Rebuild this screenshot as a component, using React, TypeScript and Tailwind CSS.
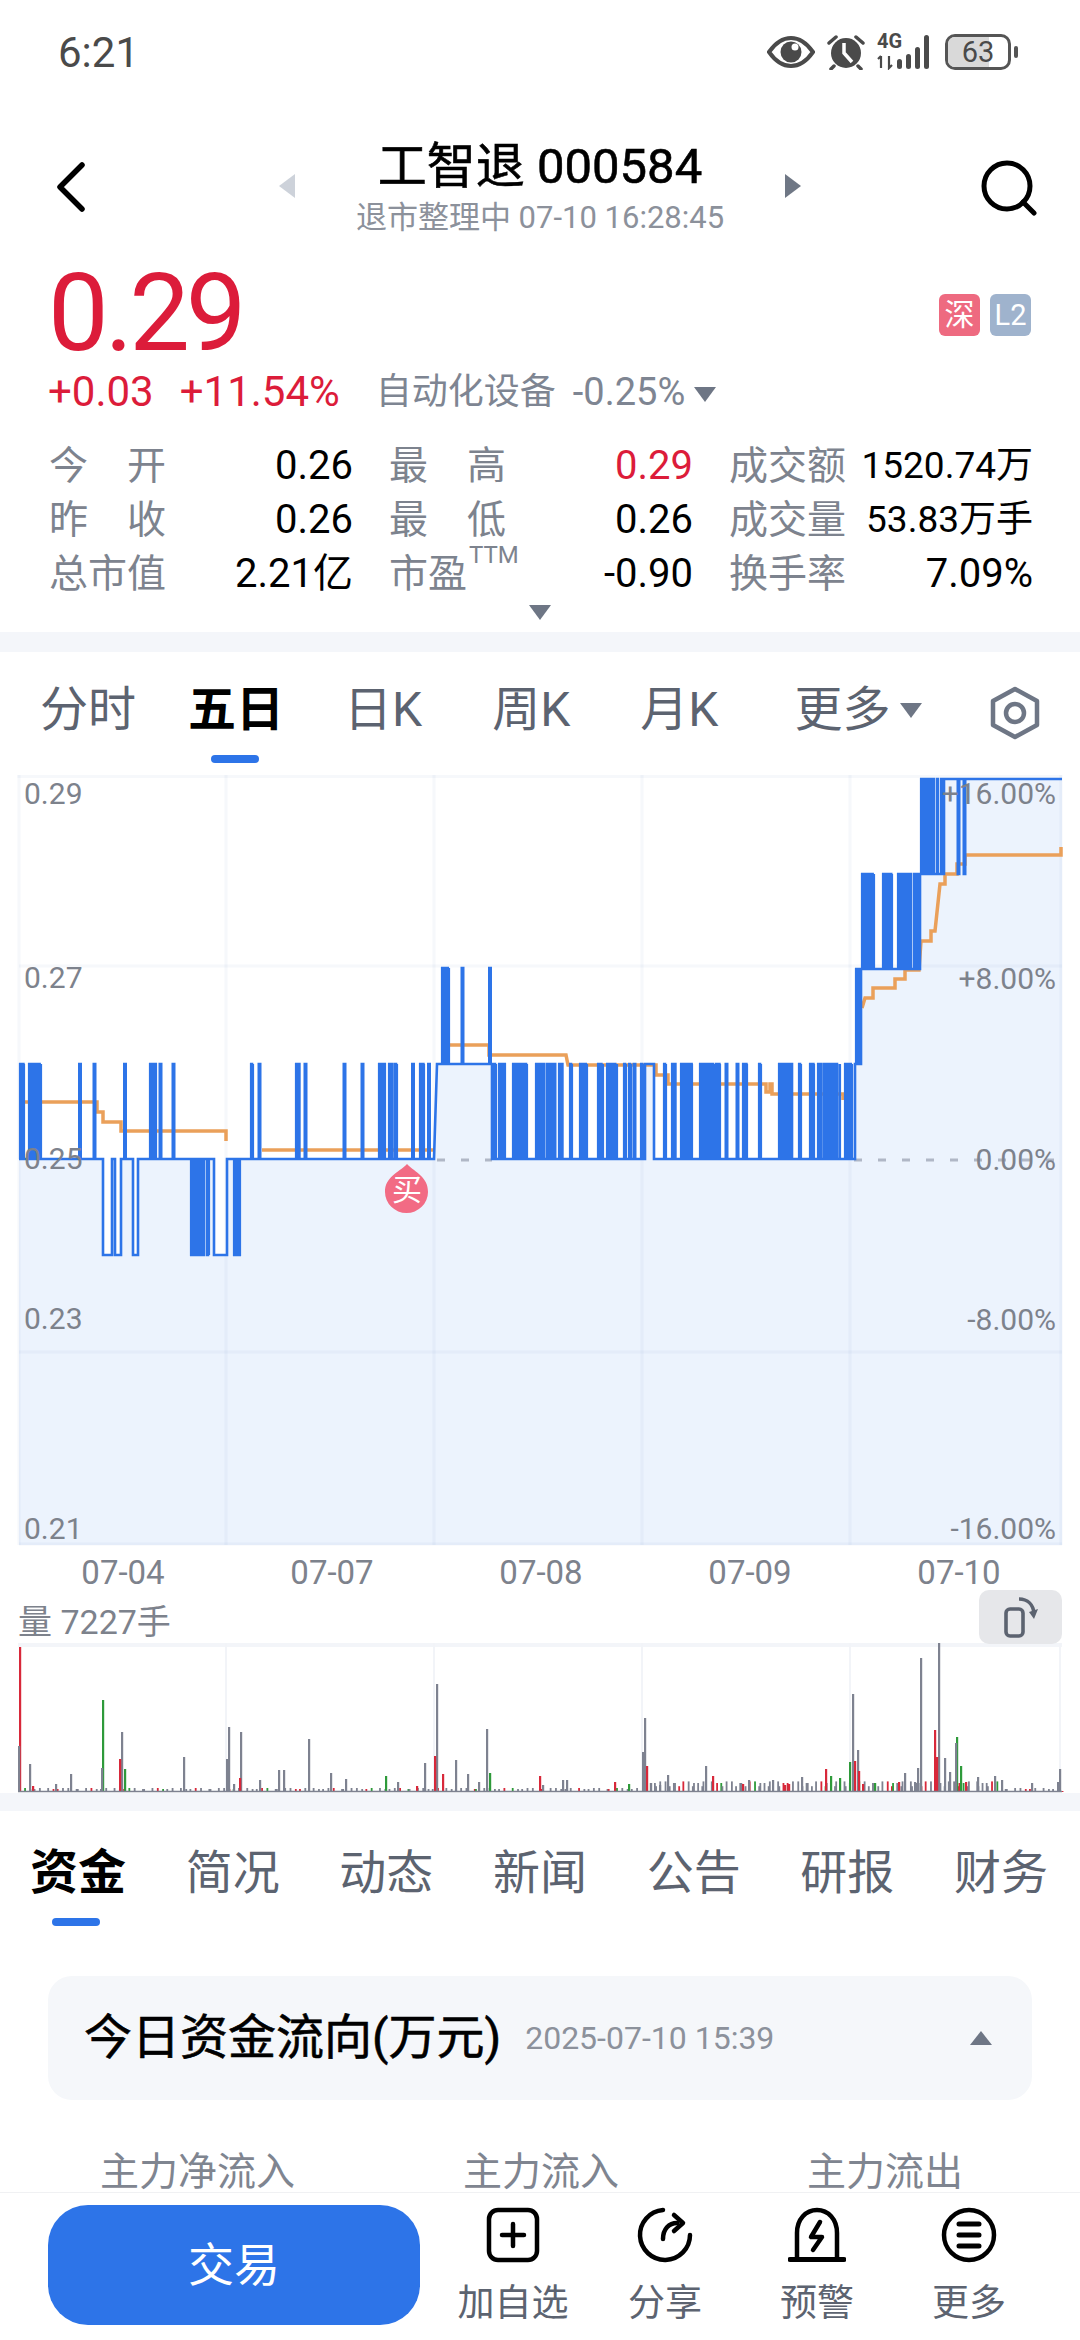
const BLUE = "#2d74e8";

type Ev = [number, number, number, boolean?];

// builds the step line in page coordinates
function piece(base: number, evs: Ev[], end: number) {
  let d = "";
  for (const [a, b, lvl, dense] of evs) {
    if (b - a <= 3) {
      const m = (a + b) / 2;
      d += `L${m - 0.7} ${base}L${m - 0.7} ${lvl}L${m + 0.7} ${lvl}L${m + 0.7} ${base}`;
    } else if (dense) {
      let k = 0;
      for (let x = a + 1.2; x < b - 1.2; k++) {
        d += `L${x} ${base}L${x} ${lvl}L${x + 0.8} ${lvl}L${x + 0.8} ${base}`;
        x += k % 6 === 5 ? 4 : 2.4;
      }
      d += `L${b - 1.2} ${base}L${b - 1.2} ${lvl}L${b - 1.2} ${base}`;
    } else {
      d += `L${a} ${base}L${a} ${lvl}L${b} ${lvl}L${b} ${base}`;
    }
  }
  return d + `L${end} ${base}`;
}

const U = 1064;
const L = 1255;
const firstDays: Ev[] = [
  [19, 25, U, true], [28, 42, U, true], [79, 81, U], [93, 96, U],
  [103, 112, L], [115, 121, L], [124, 126, U], [133, 138, L],
  [149, 157, U, true], [159, 162, U, true], [172, 175, U],
  [190, 210, L, true], [214, 227, L], [233, 241, L, true],
  [250, 254, U, true], [258, 261, U], [295, 300, U, true], [304, 307, U],
  [343, 346, U], [361, 364, U], [378, 386, U, true], [388, 393, U, true],
  [394, 398, U, true], [412, 414, U], [419, 425, U, true], [428, 430, U],
];
const midDays: Ev[] = [
  [493, 497, U, true], [498, 506, U, true], [512, 528, U, true], [535, 545, U, true],
  [546, 556, U, true], [558, 563, U, true], [569, 573, U, true], [579, 588, U, true],
  [597, 604, U, true], [606, 618, U, true], [623, 627, U, true], [628, 632, U, true],
  [633, 636, U], [640, 644, U, true], [645, 654, U],
  [663, 667, U, true], [671, 676, U, true], [680, 693, U, true], [699, 715, U, true],
  [715, 721, U, true], [725, 728, U], [736, 739, U], [742, 748, U, true],
  [758, 762, U, true], [778, 793, U, true], [798, 802, U, true], [809, 815, U, true],
  [817, 822, U, true], [823, 841, U, true], [844, 853, U, true],
];

const line =
  "M19 1159" +
  piece(1159, firstDays, 434) +
  "L437 1064" +
  piece(1064, [[441, 450, 968, true], [461, 464, 968], [489, 491, 968]], 492) +
  "L492 1159" +
  piece(1159, midDays, 855) +
  "L855 1064" +
  piece(1064, [[855, 861, 969, true]], 861) +
  "L861 969" +
  piece(969, [[861, 875, 874, true], [882, 893, 874, true], [897, 919, 874, true]], 920) +
  "L920 874" +
  piece(874, [[920, 939, 779, true], [941, 943, 779]], 944) +
  "L944 779" +
  piece(779, [[957, 960, 874], [963, 966, 874]], 1062);

const avg1 = "M25 1102H97V1112H103V1122H121V1131H226V1141";
const avg2 = "M262 1150H434";
const avg3 =
  "M445 1045H489V1055H566L568 1065H656V1075H668V1084H766V1092H770V1084H772V1094H843V1100";
const avg4 =
  "M862 1008L865 998H873V988H895V979H905V970H919L921 941H931V931H935L940 884H945V874H957V864H965V855H1061V847";

const vols: [number, number, string][] = [
  [20, 145, "r"], [19, 46, "g"], [30, 28, "g"], [33, 6, "r"], [56, 8, "g"], [71, 18, "g"],
  [103, 92, "n"], [102, 24, "g"], [122, 60, "g"], [120, 33, "r"], [125, 23, "n"],
  [184, 35, "g"], [229, 65, "g"], [227, 33, "g"], [241, 60, "g"], [240, 14, "r"],
  [234, 8, "g"], [260, 12, "g"], [279, 22, "g"], [284, 22, "g"], [309, 53, "g"],
  [331, 19, "g"], [346, 13, "g"], [386, 16, "n"], [398, 10, "g"], [417, 6, "r"],
  [425, 29, "g"], [437, 108, "g"], [435, 36, "r"], [443, 18, "r"], [456, 32, "g"],
  [468, 18, "g"], [479, 10, "g"], [487, 63, "g"], [490, 19, "n"], [540, 16, "r"],
  [543, 7, "g"], [563, 12, "g"], [567, 12, "g"], [615, 10, "r"], [629, 8, "n"],
  [645, 74, "g"], [643, 40, "g"], [647, 26, "r"], [651, 9, "g"], [668, 17, "g"],
  [660, 7, "g"], [706, 26, "g"], [713, 16, "r"], [749, 12, "g"], [743, 8, "r"],
  [773, 12, "g"], [785, 7, "r"], [802, 15, "g"], [789, 8, "r"], [826, 23, "r"],
  [831, 16, "n"], [840, 14, "n"], [853, 98, "g"], [850, 30, "n"], [855, 31, "r"],
  [858, 42, "g"], [859, 21, "r"], [863, 8, "r"], [875, 9, "n"], [899, 10, "r"],
  [905, 19, "g"], [915, 10, "g"], [921, 134, "g"], [918, 24, "g"], [935, 62, "r"],
  [939, 149, "g"], [937, 35, "r"], [945, 34, "g"], [957, 55, "n"], [956, 49, "g"],
  [961, 26, "n"], [950, 20, "g"], [966, 10, "r"], [978, 15, "g"], [995, 16, "g"],
  [1002, 12, "g"], [1032, 9, "g"], [1058, 10, "g"], [1060, 23, "g"],
];
// low noise along the volume base, busier on the last days
const noise: [number, number, string][] = Array.from({ length: 330 }, (_, i) => {
  const x = 20 + i * 3.16 + (i * 7) % 3;
  const s = (i * 37) % 11;
  const v = (i * i * 13) % 7;
  const h = x > 640 && x < 1000 ? 1 + v * 1.6 : v > 4 ? v - 2 : 1;
  return [x, h, s === 0 || s === 7 ? "r" : s === 4 ? "n" : "g"];
});
const volColor: Record<string, string> = { g: "#7e8290", r: "#d8283a", n: "#2e9a3a" };

const priceLabels = [
  ["0.29", "top-[1px]"],
  ["0.27", "top-[185px]"],
  ["0.25", "top-[366px]"],
  ["0.23", "top-[526px]"],
  ["0.21", "top-[736px]"],
];
const pctLabels = [
  ["+16.00%", "top-[1px]"],
  ["+8.00%", "top-[186px]"],
  ["0.00%", "top-[367px]"],
  ["-8.00%", "top-[527px]"],
  ["-16.00%", "top-[736px]"],
];

function Tri({ className }: { className: string }) {
  return (
    <svg viewBox="0 0 22 15" className={className}>
      <path d="M0 0H22L11 15Z" fill="currentColor" />
    </svg>
  );
}

function StatusIcons() {
  return (
    <div className="flex items-center">
      <svg width="48" height="34" viewBox="0 0 48 34" fill="none">
        <path d="M2 17C9 7 16 3 24 3s15 4 22 14c-7 10-14 14-22 14S9 27 2 17Z" stroke="#4a4a4a" strokeWidth="4" />
        <circle cx="24" cy="17" r="10.5" fill="#4a4a4a" />
        <circle cx="28" cy="12" r="3.5" fill="#fff" />
      </svg>
      <svg width="40" height="36" viewBox="0 0 40 36" className="ml-[11px]" fill="none">
        <circle cx="20" cy="19" r="15" fill="#4a4a4a" />
        <path d="M18 9V19L26 28" stroke="#fff" strokeWidth="3.5" />
        <path d="M3 9L10 3M37 9L30 3M8 32L5 35M32 32L35 35" stroke="#4a4a4a" strokeWidth="3.5" strokeLinecap="round" />
      </svg>
      <div className="relative ml-[11px] h-[36px] w-[62px]">
        <span className="absolute left-0 top-[-4px] text-[20px] font-bold leading-[22px] text-[#4a4a4a]">4G</span>
        <svg width="62" height="36" viewBox="0 0 62 36" className="absolute inset-0">
          <path d="M4 22V34M1 25L4 22M12 22V34L15 31" stroke="#4a4a4a" strokeWidth="2.2" fill="none" />
          <rect x="20" y="25" width="5" height="10" rx="2.5" fill="#4a4a4a" />
          <rect x="29" y="20" width="5" height="15" rx="2.5" fill="#4a4a4a" />
          <rect x="38" y="13" width="5" height="22" rx="2.5" fill="#4a4a4a" />
          <rect x="47" y="1" width="5" height="34" rx="2.5" fill="#4a4a4a" />
        </svg>
      </div>
      <div className="relative ml-[6px] flex h-[36px] w-[66px] items-center justify-center overflow-hidden rounded-[10px] border-[3px] border-[#555]">
        <div className="absolute inset-y-0 left-0 w-[41px] bg-[#d9d9d9]" />
        <span className="relative text-[29px] leading-none text-[#4a4a4a]">63</span>
      </div>
      <div className="ml-[3px] h-[12px] w-[4px] rounded-full bg-[#555]" />
    </div>
  );
}

function Stat({ label, value, color = "text-black text-[40px]", sup }: { label: string[]; value: string; color?: string; sup?: boolean }) {
  return (
    <div className="flex h-[54px] items-center justify-between">
      <div className="relative flex w-[117px] justify-between text-[#7d838e]">
        {label.map((t) => (
          <span key={t}>{t}</span>
        ))}
        {sup && <span className="absolute left-[80px] top-[-4px] text-[24px] leading-none">TTM</span>}
      </div>
      <span className={color}>{value}</span>
    </div>
  );
}

function Tab({ children, active }: { children: string; active?: boolean }) {
  return <span className={active ? "font-bold text-black" : "text-[#5c6370]"}>{children}</span>;
}

function Action({ label, children }: { label: string; children: React.ReactNode }) {
  return (
    <div className="flex w-[152px] flex-col items-center">
      <div className="flex h-[56px] items-center justify-center">{children}</div>
      <span className="mt-[19px] text-[37px] leading-[44px] text-[#5c6370]">{label}</span>
    </div>
  );
}

export default function App() {
  return (
    <div className="flex h-[2340px] w-[1080px] flex-col overflow-hidden bg-white font-['Roboto','Noto_Sans_CJK_SC',sans-serif]">
      <div className="flex h-[104px] shrink-0 items-center justify-between pl-[58px] pr-[62px]">
        <span className="text-[42px] text-[#4a4a4a]">6:21</span>
        <StatusIcons />
      </div>

      <div className="relative flex h-[144px] shrink-0 flex-col items-center">
        <div className="mt-[33px] text-[49px] leading-[60px] text-black [-webkit-text-stroke:0.6px_#000]">工智退 000584</div>
        <div className="mt-[2px] text-[31px] leading-[38px] text-[#8c919b]">退市整理中 07-10 16:28:45</div>
        <svg width="30" height="50" viewBox="0 0 30 50" className="absolute left-[56px] top-[58px]" fill="none">
          <path d="M26 3L4 25L26 47" stroke="#000" strokeWidth="5.5" strokeLinecap="round" strokeLinejoin="round" />
        </svg>
        <svg width="16" height="24" viewBox="0 0 16 24" className="absolute left-[279px] top-[70px]">
          <path d="M16 0V24L0 12Z" fill="#cdd2da" />
        </svg>
        <svg width="16" height="24" viewBox="0 0 16 24" className="absolute left-[785px] top-[70px]">
          <path d="M0 0V24L16 12Z" fill="#6f7785" />
        </svg>
        <svg width="56" height="56" viewBox="0 0 56 56" className="absolute left-[981px] top-[56px]" fill="none">
          <circle cx="26" cy="26" r="23" stroke="#000" strokeWidth="5" />
          <path d="M42 42L53 53" stroke="#000" strokeWidth="5" strokeLinecap="round" />
        </svg>
      </div>

      <div className="relative h-[120px] shrink-0 pl-[48px] pt-[13px]">
        <div className="text-[108px] leading-[105px] tracking-[-4px] text-[#dc1c3a]">0.29</div>
        <div className="absolute left-[939px] top-[46px] flex h-[42px] w-[41px] items-center justify-center rounded-[6px] bg-[#ee6a80] text-[30px] leading-none text-white">深</div>
        <div className="absolute left-[990px] top-[46px] flex h-[42px] w-[41px] items-center justify-center rounded-[6px] bg-[#9fb3cd] text-[29px] leading-none text-white">L2</div>
      </div>

      <div className="flex h-[48px] shrink-0 items-center pl-[48px] text-[42px] leading-none">
        <span className="text-[#dc1c3a]">+0.03</span>
        <span className="ml-[26px] text-[#dc1c3a]">+11.54%</span>
        <span className="ml-[36px] text-[36px] text-[#7e8592]">自动化设备</span>
        <span className="ml-[17px] text-[38px] text-[#7e8592]">-0.25%</span>
        <Tri className="ml-[9px] mt-[4px] w-[22px] text-[#6e7685]" />
      </div>

      <div className="mt-[23px] grid shrink-0 grid-cols-[304px_304px_304px] gap-x-[36px] pl-[49px] text-[39px] leading-[54px]">
        <div>
          <Stat label={["今", "开"]} value="0.26" />
          <Stat label={["昨", "收"]} value="0.26" />
          <Stat label={["总市值"]} value="2.21亿" />
        </div>
        <div>
          <Stat label={["最", "高"]} value="0.29" color="text-[40px] text-[#dc1c3a]" />
          <Stat label={["最", "低"]} value="0.26" />
          <Stat label={["市盈"]} value="-0.90" sup />
        </div>
        <div>
          <Stat label={["成交额"]} value="1520.74万" color="text-[37px] text-black" />
          <Stat label={["成交量"]} value="53.83万手" color="text-[37px] text-black" />
          <Stat label={["换手率"]} value="7.09%" />
        </div>
      </div>

      <div className="flex h-[19px] shrink-0 items-end justify-center">
        <Tri className="w-[22px] text-[#6e7685]" />
      </div>

      <div className="mt-[12px] h-[20px] shrink-0 bg-[#f4f6fa]" />

      <div className="relative flex h-[123px] shrink-0 items-start pl-[40px] pt-[30px] text-[48px] leading-[56px]">
        <div className="flex gap-[52px]">
          <Tab>分时</Tab>
          <Tab active>五日</Tab>
          <span className="ml-[8px] flex gap-[70px]">
            <Tab>日K</Tab>
            <Tab>周K</Tab>
            <Tab>月K</Tab>
          </span>
        </div>
        <div className="ml-[76px] flex items-center">
          <Tab>更多</Tab>
          <Tri className="ml-[10px] w-[22px] text-[#6e7685]" />
        </div>
        <svg width="52" height="54" viewBox="0 0 52 54" className="absolute left-[989px] top-[34px]" fill="none">
          <path d="M26 3L48 15V39L26 51L4 39V15Z" stroke="#6e7685" strokeWidth="4.5" strokeLinejoin="round" />
          <circle cx="26" cy="27" r="9" stroke="#6e7685" strokeWidth="4.5" />
        </svg>
        <div className="absolute left-[211px] top-[103px] h-[8px] w-[48px] rounded-full bg-[#2d74e8]" />
      </div>

      <div className="relative h-[771px] shrink-0 text-[30px] leading-[36px] text-[#7d828c]">
        <svg width="1080" height="771" viewBox="0 775 1080 771" className="block">
          <path d={`${line}L1062 1545L19 1545Z`} fill="#ecf3fd" />
          <g stroke="#5a78b4" strokeOpacity="0.055" strokeWidth="3">
            <path d="M17.5 776.5H1062M19 966H1062M19 1352H1062M19 1544H1062" />
            <path d="M19 775V1545M226 775V1545M434 775V1545M642 775V1545M850 775V1545M1061 775V1545" />
          </g>
          <path d="M854 1160H1060" stroke="#b0b7c6" strokeWidth="3" strokeDasharray="8 16" />
          <path d="M437 1160H492" stroke="#b0b7c6" strokeWidth="3" strokeDasharray="8 16" />
          <g fill="none" stroke="#eaa05a" strokeWidth="3.5">
            <path d={avg1} />
            <path d={avg2} />
            <path d={avg3} />
            <path d={avg4} />
          </g>
          <path d={line} fill="none" stroke={BLUE} strokeWidth="2.6" />
          <path d="M407 1164C416 1173 428 1177 428 1192A21.5 21 0 0 1 385 1192C385 1177 398 1173 407 1164Z" fill="#f26b84" />
        </svg>
        {priceLabels.map(([t, pos]) => (
          <span key={t} className={`absolute left-[24px] ${pos}`}>{t}</span>
        ))}
        {pctLabels.map(([t, pos]) => (
          <span key={t} className={`absolute right-[24px] ${pos}`}>{t}</span>
        ))}
        <span className="absolute left-[392px] top-[400px] text-[30px] leading-[30px] text-white">买</span>
      </div>

      <div className="flex h-[54px] shrink-0 items-center text-[33px] leading-[40px] text-[#7d828c]">
        <div className="ml-[78px] flex gap-[119px] whitespace-nowrap">
          <span className="w-[90px] text-center">07-04</span>
          <span className="w-[90px] text-center">07-07</span>
          <span className="w-[90px] text-center">07-08</span>
          <span className="w-[90px] text-center">07-09</span>
          <span className="w-[90px] text-center">07-10</span>
        </div>
      </div>

      <div className="relative h-[43px] shrink-0 pl-[18px] pt-[2px] text-[34px] leading-[40px] text-[#7d828c]">
        量 7227手
        <div className="absolute left-[979px] top-[-10px] flex h-[54px] w-[83px] items-center justify-center rounded-[10px] bg-[#e6e7ea]">
          <svg width="40" height="42" viewBox="0 0 40 42" fill="none">
            <rect x="5" y="13" width="17" height="27" rx="4" stroke="#5c6370" strokeWidth="3.6" />
            <path d="M18 3C27 3 32 9 33 17" stroke="#5c6370" strokeWidth="3.6" />
            <path d="M28 16L37 13L33 23Z" fill="#5c6370" />
          </svg>
        </div>
      </div>

      <svg width="1080" height="150" viewBox="0 1643 1080 150" className="block shrink-0">
        <path d="M18 1645H1062" stroke="#f3f5f9" strokeWidth="4" />
        <path d="M226 1643V1792M434 1643V1792M642 1643V1792M850 1643V1792M1060 1643V1792" stroke="#f2f4f8" strokeWidth="2" />
        {noise.map(([x, h, c], i) => (
          <rect key={i} x={x} y={1792 - h} width="1.8" height={h} fill={volColor[c]} />
        ))}
        {vols.map(([x, h, c], i) => (
          <rect key={i} x={x - 1} y={1792 - h} width="2.2" height={h} fill={volColor[c]} />
        ))}
        <path d="M18 1791.5H1062" stroke="#7e8290" strokeWidth="1.5" />
      </svg>

      <div className="h-[18px] shrink-0 bg-[#f4f6fa]" />

      <div className="relative flex h-[165px] shrink-0 justify-between pl-[30px] pr-[32px] pt-[32px] text-[47px] leading-[60px] text-[#5c6370]">
        <span className="text-[48px] font-bold text-black">资金</span>
        <span>简况</span>
        <span>动态</span>
        <span>新闻</span>
        <span>公告</span>
        <span>研报</span>
        <span>财务</span>
        <div className="absolute left-[52px] top-[107px] h-[8px] w-[48px] rounded-full bg-[#2d74e8]" />
      </div>

      <div className="mx-[48px] flex h-[124px] shrink-0 items-center rounded-[24px] bg-[#f5f7fa] pl-[36px] pr-[40px]">
        <span className="text-[48px] text-black [-webkit-text-stroke:0.6px_#000]">今日资金流向(万元)</span>
        <span className="ml-[24px] text-[32px] text-[#8c919b]">2025-07-10 15:39</span>
        <svg width="22" height="14" viewBox="0 0 22 14" className="ml-auto">
          <path d="M0 14H22L11 0Z" fill="#6e7685" />
        </svg>
      </div>

      <div className="flex h-[92px] shrink-0 items-end text-[39px] leading-[48px] text-[#7f8590]">
        <span className="-mb-[4px] ml-[100px]">主力净流入</span>
        <span className="-mb-[4px] ml-[168px]">主力流入</span>
        <span className="-mb-[4px] ml-[188px]">主力流出</span>
      </div>

      <div className="flex min-h-0 flex-1 items-start border-t border-[#f0f1f3] bg-white pl-[48px] pt-[12px]">
        <div className="flex h-[120px] w-[372px] items-center justify-center rounded-[40px] bg-[#2d74e8] text-[46px] text-white">交易</div>
        <div className="ml-[17px] mt-[2px] flex">
          <Action label="加自选">
            <svg width="54" height="56" viewBox="0 0 54 56" fill="none">
              <rect x="3" y="3" width="48" height="50" rx="9" stroke="#000" strokeWidth="4.5" />
              <path d="M27 17V39M16 28H38" stroke="#000" strokeWidth="4.5" strokeLinecap="round" />
            </svg>
          </Action>
          <Action label="分享">
            <svg width="56" height="56" viewBox="0 0 56 56" fill="none">
              <path d="M26 3A25 25 0 1 0 53 28" stroke="#000" strokeWidth="4.5" strokeLinecap="round" />
              <path d="M26 32C26 22 32 16 40 16" stroke="#000" strokeWidth="4.5" strokeLinecap="round" />
              <path d="M37 8L46 16L37 24" stroke="#000" strokeWidth="4.5" strokeLinecap="round" strokeLinejoin="round" />
            </svg>
          </Action>
          <Action label="预警">
            <svg width="58" height="56" viewBox="0 0 58 56" fill="none">
              <path d="M9 52V26C9 12 18 3 29 3S49 12 49 26V52" stroke="#000" strokeWidth="4.5" />
              <path d="M2 52.5H56" stroke="#000" strokeWidth="5" strokeLinecap="round" />
              <path d="M32 15L23 30H34L25 43" stroke="#000" strokeWidth="4.5" strokeLinecap="round" strokeLinejoin="round" />
            </svg>
          </Action>
          <Action label="更多">
            <svg width="56" height="56" viewBox="0 0 56 56" fill="none">
              <circle cx="28" cy="28" r="25" stroke="#000" strokeWidth="4.5" />
              <path d="M18 17H38M18 28H38M18 39H38" stroke="#000" strokeWidth="5" strokeLinecap="round" />
            </svg>
          </Action>
        </div>
      </div>
    </div>
  );
}
